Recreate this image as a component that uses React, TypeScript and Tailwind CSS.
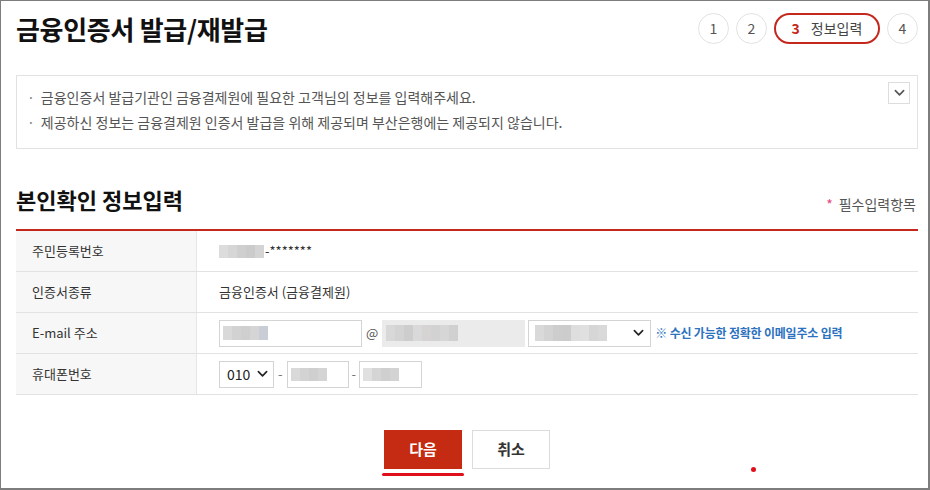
import React from "react";

const Chevron = ({ className = "" }: { className?: string }) => (
  <svg viewBox="0 0 12 8" className={className} fill="none" stroke="currentColor" strokeWidth="1.8" strokeLinecap="round" strokeLinejoin="round">
    <path d="M1.5 1.5 6 6l4.5-4.5" />
  </svg>
);

const Blur = ({ shades, w = 9, h = 13 }: { shades: string[]; w?: number; h?: number }) => (
  <div className="flex">
    {shades.map((c, i) => (
      <div key={i} style={{ background: c, width: w, height: h }} />
    ))}
  </div>
);

export default function App() {
  return (
    <div className="relative w-[930px] h-[490px] overflow-hidden bg-white border-t border-l border-r-2 border-b-2 border-[#7d7d7d] text-[#333] font-['Noto_Sans_CJK_KR','Noto_Sans',sans-serif]">
      <div className="px-[15px]">
        {/* Header */}
        <div className="w-[902px] flex items-center justify-between pt-[11px] h-[44px]">
          <h1 className="text-[26px] leading-[32px] font-bold text-[#111] tracking-[-0.3px]">금융인증서 발급/재발급</h1>
          <div className="flex items-center gap-[7px]">
            <div className="w-[31px] h-[31px] rounded-full border border-[#e2e2e2] flex items-center justify-center text-[14px] text-[#555]">1</div>
            <div className="w-[31px] h-[31px] rounded-full border border-[#e2e2e2] flex items-center justify-center text-[14px] text-[#555]">2</div>
            <div className="w-[106px] h-[31px] rounded-full border-2 border-[#c4281c] flex items-center justify-center gap-[11px] text-[14px]">
              <span className="text-[#c4281c] font-bold">3</span>
              <span className="text-[#444]">정보입력</span>
            </div>
            <div className="w-[31px] h-[31px] rounded-full border border-[#e2e2e2] flex items-center justify-center text-[14px] text-[#555]">4</div>
          </div>
        </div>

        {/* Info box */}
        <div className="relative mt-[30px] w-[902px] border border-[#e2e2e2] pt-[9px] pb-[13px] pl-[10px] text-[14px] leading-[25px] text-[#555]">
          <p className="flex gap-[6px]"><span className="text-[#888]">·</span>금융인증서 발급기관인 금융결제원에 필요한 고객님의 정보를 입력해주세요.</p>
          <p className="flex gap-[6px]"><span className="text-[#888]">·</span>제공하신 정보는 금융결제원 인증서 발급을 위해 제공되며 부산은행에는 제공되지 않습니다.</p>
          <button className="absolute right-[7px] top-[6px] w-[22px] h-[22px] border border-[#ddd] flex items-center justify-center text-[#555]">
            <Chevron className="w-[11px] h-[8px]" />
          </button>
        </div>

        {/* Section title */}
        <div className="mt-[35px] w-[902px] flex items-end justify-between pb-[15px]">
          <h2 className="text-[22px] leading-[30px] font-bold text-[#111]">본인확인 정보입력</h2>
          <span className="text-[14px] text-[#555] pr-[2px] leading-[20px]"><span className="text-[#e5467b] mr-[6px]">*</span>필수입력항목</span>
        </div>

        {/* Table */}
        <div className="w-[902px] border-t-2 border-[#c4281c] text-[13px]">
          <div className="flex h-[41px] border-b border-[#e2e2e2]">
            <div className="w-[181px] shrink-0 bg-[#f7f7f7] border-r border-[#e6e6e6] flex items-center pl-[16px]">주민등록번호</div>
            <div className="flex items-center pl-[22px]">
              <Blur shades={["#dcdcdc", "#d6d6d6", "#cfcfcf", "#cbcbcb", "#d4d4d4"]} />
              <span className="ml-[1px]">-*******</span>
            </div>
          </div>
          <div className="flex h-[41px] border-b border-[#e2e2e2]">
            <div className="w-[181px] shrink-0 bg-[#f7f7f7] border-r border-[#e6e6e6] flex items-center pl-[16px]">인증서종류</div>
            <div className="flex items-center pl-[22px]">금융인증서 (금융결제원)</div>
          </div>
          <div className="flex h-[41px] border-b border-[#e2e2e2]">
            <div className="w-[181px] shrink-0 bg-[#f7f7f7] border-r border-[#e6e6e6] flex items-center pl-[16px]">E-mail 주소</div>
            <div className="flex items-center pl-[22px]">
              <div className="w-[143px] h-[27px] border border-[#d4d4d4] flex items-center pl-[3px]">
                <Blur shades={["#d9d9d9", "#d2d2d2", "#cfcfcf", "#d5d5d5", "#c9cdd6"]} h={14} />
              </div>
              <span className="mx-[4px] text-[#555]">@</span>
              <div className="w-[143px] h-[27px] bg-[#ebebeb] flex items-center pl-[4px]">
                <Blur shades={["#d8d8d8", "#d3d3d3", "#cdcdcd", "#d9d9d9", "#d6d4d2", "#d2d2d2", "#d6d6d6", "#d0d0d0"]} h={16} />
              </div>
              <div className="ml-[3px] w-[123px] h-[27px] border border-[#d4d4d4] flex items-center justify-between pl-[6px] pr-[6px]">
                <Blur shades={["#d9d9d9", "#d3d3d3", "#cdcdcd", "#cccccc", "#dedede", "#e0e0e0", "#d6d6d6", "#d9d9d9"]} h={16} />
                <Chevron className="w-[11px] h-[8px] text-[#222]" />
              </div>
              <span className="ml-[4px] text-[12px] font-bold text-[#2c72bf] tracking-[-0.2px]">※ 수신 가능한 정확한 이메일주소 입력</span>
            </div>
          </div>
          <div className="flex h-[41px] border-b border-[#e2e2e2]">
            <div className="w-[181px] shrink-0 bg-[#f7f7f7] border-r border-[#e6e6e6] flex items-center pl-[16px]">휴대폰번호</div>
            <div className="flex items-center pl-[22px] text-[#777]">
              <div className="w-[55px] h-[27px] border border-[#d4d4d4] flex items-center justify-between pl-[7px] pr-[5px] text-[14px] text-[#222]">
                <span>010</span>
                <Chevron className="w-[11px] h-[8px]" />
              </div>
              <span className="mx-[4px]">-</span>
              <div className="w-[62px] h-[27px] border border-[#d4d4d4] flex items-center pl-[3px]">
                <Blur shades={["#d9d9d9", "#d3d3d3", "#cfcfcf", "#d4d4d4"]} h={13} />
              </div>
              <span className="mx-[3px]">-</span>
              <div className="w-[63px] h-[27px] border border-[#d4d4d4] flex items-center pl-[3px]">
                <Blur shades={["#e0e0e0", "#d5d5d5", "#cfcfcf", "#d3d3d3"]} h={13} />
              </div>
            </div>
          </div>
        </div>

        {/* Buttons */}
        <div className="mt-[35px] w-[902px] flex justify-center items-start gap-[10px]">
          <div className="w-[78px] flex flex-col items-center">
            <button className="w-[78px] h-[39px] shrink-0 bg-[#c52a12] text-white text-[15px] font-bold">다음</button>
            <div className="mt-[4px] w-[82px] h-[3px] shrink-0 rounded-full bg-[#e0101a]" />
          </div>
          <button className="w-[78px] h-[39px] border border-[#dcdcdc] bg-white text-[15px] font-bold text-[#333]">취소</button>
        </div>
      </div>
      <div className="absolute left-[750px] top-[466px] w-[5px] h-[5px] rounded-full bg-[#e0101a]" />
    </div>
  );
}
